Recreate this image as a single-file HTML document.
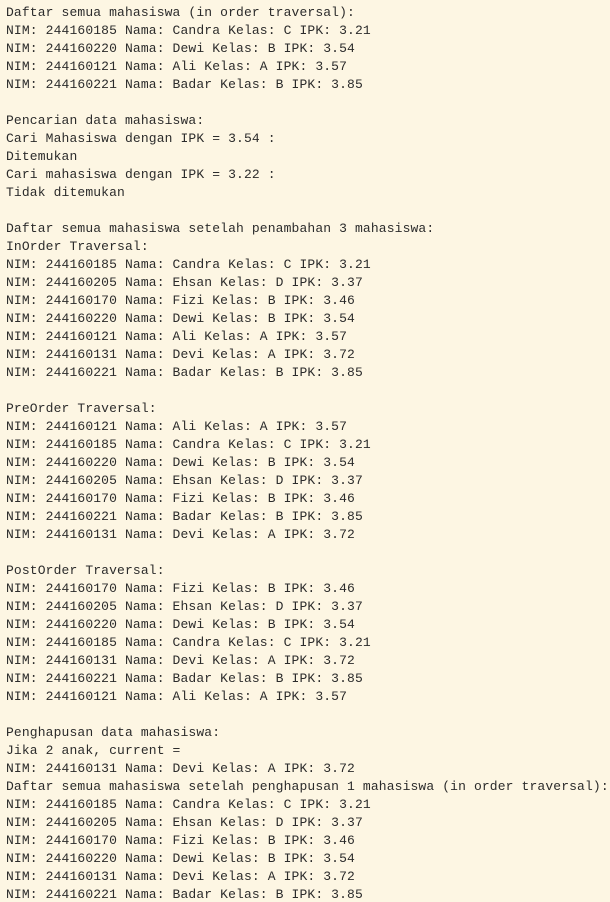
<!DOCTYPE html>
<html><head><meta charset="utf-8"><style>
html,body{margin:0;padding:0;background:#fdf6e3;width:610px;height:902px;overflow:hidden}
pre{margin:0;padding:4px 0 0 6px;font-family:"Liberation Mono","DejaVu Sans Mono",monospace;font-size:13px;letter-spacing:0.13px;line-height:18px;color:#2b2b2b;white-space:pre}
</style></head><body><pre>Daftar semua mahasiswa (in order traversal):
NIM: 244160185 Nama: Candra Kelas: C IPK: 3.21
NIM: 244160220 Nama: Dewi Kelas: B IPK: 3.54
NIM: 244160121 Nama: Ali Kelas: A IPK: 3.57
NIM: 244160221 Nama: Badar Kelas: B IPK: 3.85

Pencarian data mahasiswa:
Cari Mahasiswa dengan IPK = 3.54 :
Ditemukan
Cari mahasiswa dengan IPK = 3.22 :
Tidak ditemukan

Daftar semua mahasiswa setelah penambahan 3 mahasiswa:
InOrder Traversal:
NIM: 244160185 Nama: Candra Kelas: C IPK: 3.21
NIM: 244160205 Nama: Ehsan Kelas: D IPK: 3.37
NIM: 244160170 Nama: Fizi Kelas: B IPK: 3.46
NIM: 244160220 Nama: Dewi Kelas: B IPK: 3.54
NIM: 244160121 Nama: Ali Kelas: A IPK: 3.57
NIM: 244160131 Nama: Devi Kelas: A IPK: 3.72
NIM: 244160221 Nama: Badar Kelas: B IPK: 3.85

PreOrder Traversal:
NIM: 244160121 Nama: Ali Kelas: A IPK: 3.57
NIM: 244160185 Nama: Candra Kelas: C IPK: 3.21
NIM: 244160220 Nama: Dewi Kelas: B IPK: 3.54
NIM: 244160205 Nama: Ehsan Kelas: D IPK: 3.37
NIM: 244160170 Nama: Fizi Kelas: B IPK: 3.46
NIM: 244160221 Nama: Badar Kelas: B IPK: 3.85
NIM: 244160131 Nama: Devi Kelas: A IPK: 3.72

PostOrder Traversal:
NIM: 244160170 Nama: Fizi Kelas: B IPK: 3.46
NIM: 244160205 Nama: Ehsan Kelas: D IPK: 3.37
NIM: 244160220 Nama: Dewi Kelas: B IPK: 3.54
NIM: 244160185 Nama: Candra Kelas: C IPK: 3.21
NIM: 244160131 Nama: Devi Kelas: A IPK: 3.72
NIM: 244160221 Nama: Badar Kelas: B IPK: 3.85
NIM: 244160121 Nama: Ali Kelas: A IPK: 3.57

Penghapusan data mahasiswa:
Jika 2 anak, current =
NIM: 244160131 Nama: Devi Kelas: A IPK: 3.72
Daftar semua mahasiswa setelah penghapusan 1 mahasiswa (in order traversal):
NIM: 244160185 Nama: Candra Kelas: C IPK: 3.21
NIM: 244160205 Nama: Ehsan Kelas: D IPK: 3.37
NIM: 244160170 Nama: Fizi Kelas: B IPK: 3.46
NIM: 244160220 Nama: Dewi Kelas: B IPK: 3.54
NIM: 244160131 Nama: Devi Kelas: A IPK: 3.72
NIM: 244160221 Nama: Badar Kelas: B IPK: 3.85</pre></body></html>
